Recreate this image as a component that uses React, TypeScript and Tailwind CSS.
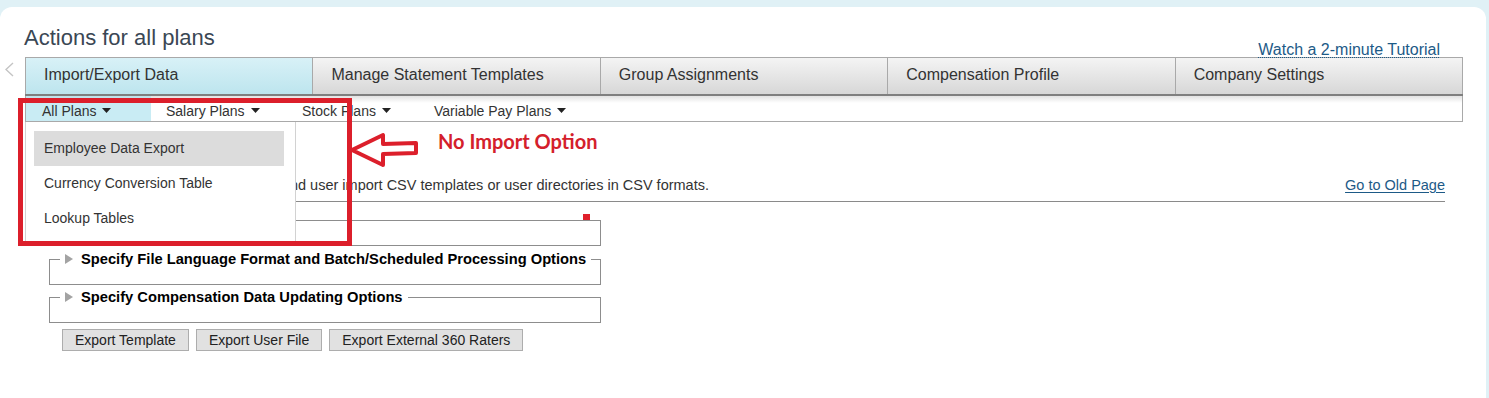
import React from "react";

const TABS = [
  "Import/Export Data",
  "Manage Statement Templates",
  "Group Assignments",
  "Compensation Profile",
  "Company Settings",
];

const SUB_TABS = [
  { label: "All Plans", w: "w-[125px]", pl: "pl-[16px]" },
  { label: "Salary Plans", w: "w-[136px]", pl: "pl-[15px]" },
  { label: "Stock Plans", w: "w-[132px]", pl: "pl-[15px]" },
  { label: "Variable Pay Plans", w: "w-[160px]", pl: "pl-[15px]" },
];

const MENU = ["Employee Data Export", "Currency Conversion Table", "Lookup Tables"];

function Caret() {
  return (
    <svg width="9" height="5" viewBox="0 0 9 5" className="inline-block ml-[6px] mb-[2px]">
      <path d="M0 0 H9 L4.5 5 Z" fill="#222" />
    </svg>
  );
}

function Triangle() {
  return (
    <svg width="8" height="10" viewBox="0 0 8 10" className="inline-block mr-[8px] mb-[3px] align-middle">
      <path d="M0 0 L8 5 L0 10 Z" fill="#a3a3a3" />
    </svg>
  );
}

function Section({ title }: { title: string }) {
  return (
    <fieldset className="ml-[49px] w-[552px] h-[35px] border border-[#8d8d8d] pl-[10px] pr-0">
      <legend className="px-[5px] whitespace-nowrap text-[14.7px] leading-[18px] font-bold text-black">
        <Triangle />
        {title}
      </legend>
    </fieldset>
  );
}

export default function App() {
  return (
    <div className="w-[1489px] h-[398px] bg-[#e0f1f6] pt-[7px] overflow-hidden font-['Liberation_Sans',Arial,sans-serif]">
      <div className="relative h-full mr-[3px] bg-white rounded-t-[12px]">
        {/* header */}
        <div className="flex items-end justify-between h-[50px] pl-[24px] pr-[46px]">
          <h1 className="text-[22px] leading-[26px] mb-[6px] text-[#3a4754]">Actions for all plans</h1>
          <a className="relative z-10 -mb-[2px] text-[16px] leading-[18px] text-[#1d5a87] underline decoration-dotted decoration-1 underline-offset-[2px]">
            Watch a 2-minute Tutorial
          </a>
        </div>

        {/* tabs */}
        <div className="flex">
          <div className="w-[25px] pl-[5px] pt-[5px]">
            <svg width="9" height="15" viewBox="0 0 9 15">
              <polyline points="8,1 1,7.5 8,14" fill="none" stroke="#c4c4c4" strokeWidth="1.4" />
            </svg>
          </div>
          <div className="flex-1 mr-[23px]">
            <div className="flex h-[37px] border border-b-0 border-[#a9a9a9]">
              {TABS.map((t, i) => (
                <div
                  key={t}
                  className={`flex-1 flex items-center pl-[18px] pb-[2px] text-[16px] text-[#333] ${
                    i > 0 ? "border-l border-[#a9a9a9]" : ""
                  } ${
                    i === 0
                      ? "bg-[linear-gradient(to_bottom,#d8f1f7,#bde5ee)]"
                      : "bg-[linear-gradient(to_bottom,#f4f4f4,#d7d7d7)]"
                  }`}
                >
                  {t}
                </div>
              ))}
            </div>
            <div className="h-[2px] bg-[#7f7f7f]" />
            <div className="flex h-[26px] border-x border-b border-[#a9a9a9] bg-[linear-gradient(to_bottom,#e2e2e2_0px,#ffffff_7px)]">
              {SUB_TABS.map((s, i) => (
                <div
                  key={s.label}
                  className={`${s.w} ${s.pl} flex items-center pt-[5px] text-[14px] text-[#333] ${
                    i === 0 ? "bg-[linear-gradient(to_bottom,#bfe3eb,#c9ecf4_6px)]" : ""
                  }`}
                >
                  {s.label}
                  <Caret />
                </div>
              ))}
            </div>
          </div>
        </div>

        {/* description */}
        <div className="flex justify-between items-end ml-[25px] mr-[41px] mt-[53px] pb-[6px] border-b border-[#8a8a8a]">
          <div className="ml-[271px] w-[413px] flex justify-end overflow-hidden">
            <p className="shrink-0 whitespace-nowrap text-[14.5px] leading-[20px] text-[#333]">
              Export employee data and user import CSV templates or user directories in CSV formats.
            </p>
          </div>
          <a className="text-[14.5px] leading-[20px] text-[#1d5a87] underline underline-offset-[2px]">Go to Old Page</a>
        </div>

        {/* sections */}
        <div className="relative ml-[49px] w-[552px] mt-[18px] h-[26px] border border-[#8d8d8d]">
          <div className="absolute left-[533px] -top-[7px] w-[7px] h-[6px] bg-[#e0202b]" />
        </div>
        <div className="mt-[4px]">
          <Section title="Specify File Language Format and Batch/Scheduled Processing Options" />
        </div>
        <div className="mt-[3px]">
          <Section title="Specify Compensation Data Updating Options" />
        </div>

        <div className="flex gap-[7px] ml-[62px] mt-[6px]">
          {["Export Template", "Export User File", "Export External 360 Raters"].map((b) => (
            <button
              key={b}
              className="h-[22px] px-[12px] bg-[#e1e1e1] border border-[#adadad] text-[14px] leading-[20px] text-[#222]"
            >
              {b}
            </button>
          ))}
        </div>

        {/* open dropdown menu */}
        <div className="absolute left-[25px] top-[115px] w-[271px] h-[120px] bg-white border-x border-b border-[#d2d2d2] pt-[9px]">
          {MENU.map((m, i) => (
            <div
              key={m}
              className={`ml-[8px] w-[250px] h-[35px] flex items-center pl-[10px] text-[14px] text-[#333] ${
                i === 0 ? "bg-[#dcdcdc]" : ""
              }`}
            >
              {m}
            </div>
          ))}
        </div>

        {/* annotation */}
        <div className="absolute left-[18px] top-[91px] w-[334px] h-[148px] border-[5px] border-[#dc1f2b]" />
        <svg className="absolute left-[348px] top-[125px]" width="74" height="42" viewBox="0 0 74 42">
          <path
            d="M4 18 L35 3 L35 12 L68 11 L68 21 L35 22 L35 33 Z"
            fill="#ffffff"
            stroke="#dc1f2b"
            strokeWidth="4"
            strokeLinejoin="round"
          />
        </svg>
        <div className="absolute left-[438px] top-[122px] font-['Lato',sans-serif] font-bold text-[20px] leading-[24px] text-[#d4202b]">
          No Import Option
        </div>
      </div>
    </div>
  );
}
